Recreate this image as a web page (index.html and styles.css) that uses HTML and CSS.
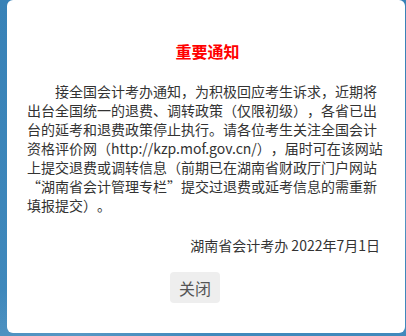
FILE: index.html
```html
<!DOCTYPE html>
<html lang="zh-CN">
<head>
    <meta charset="UTF-8">
    <meta name="viewport" content="width=device-width, initial-scale=1.0">
    <title>重要通知</title>
    <link rel="stylesheet" href="styles.css">
</head>
<body>
    <div class="notice-dialog">
        <h3 class="notice-title">重要通知</h3>
        <p class="notice-text">接全国会计考办通知，为积极回应考生诉求，近期将出台全国统一的退费、调转政策（仅限初级），各省已出台的延考和退费政策停止执行。请各位考生关注全国会计资格评价网（http://kzp.mof.gov.cn/），届时可在该网站上提交退费或调转信息（前期已在湖南省财政厅门户网站“湖南省会计管理专栏”提交过退费或延考信息的需重新填报提交）。</p>
        <p class="notice-sign">湖南省会计考办 2022年7月1日</p>
        <div class="notice-actions">
            <button class="close-btn">关闭</button>
        </div>
    </div>
</body>
</html>
```

FILE: styles.css
```css
* {
    margin: 0;
    padding: 0;
    box-sizing: border-box;
}

body {
    font-family: "Noto Sans CJK SC", "Noto Sans", sans-serif;
    background-color: #3a85b9;
    background-image:
        linear-gradient(160deg, transparent 60%, rgba(255, 255, 255, 0.12) 75%, transparent 85%),
        linear-gradient(180deg, #3882b7 0%, #4089bc 100%);
    height: 336px;
    overflow: hidden;
    color: #333;
    text-spacing-trim: space-all;
}

.notice-dialog {
    margin-left: 7px;
    width: 398px;
    height: 333px;
    background: #fff;
    border-radius: 6px;
    padding: 40px 17px 0 20px;
}

.notice-title {
    color: #f00;
    font-size: 16px;
    font-weight: bold;
    line-height: 22px;
    text-align: center;
}

.notice-text {
    margin-top: 20px;
    font-size: 14px;
    line-height: 19px;
    text-indent: 2em;
}

.notice-sign {
    margin-top: 21px;
    font-size: 14px;
    line-height: 19px;
    text-align: right;
    padding-right: 8px;
}

.notice-actions {
    margin-top: 17px;
    padding-left: 143px;
}

.close-btn {
    width: 50px;
    height: 31px;
    border: none;
    border-radius: 4px;
    background: #eee;
    color: #555;
    font-family: inherit;
    font-size: 16px;
}
```
